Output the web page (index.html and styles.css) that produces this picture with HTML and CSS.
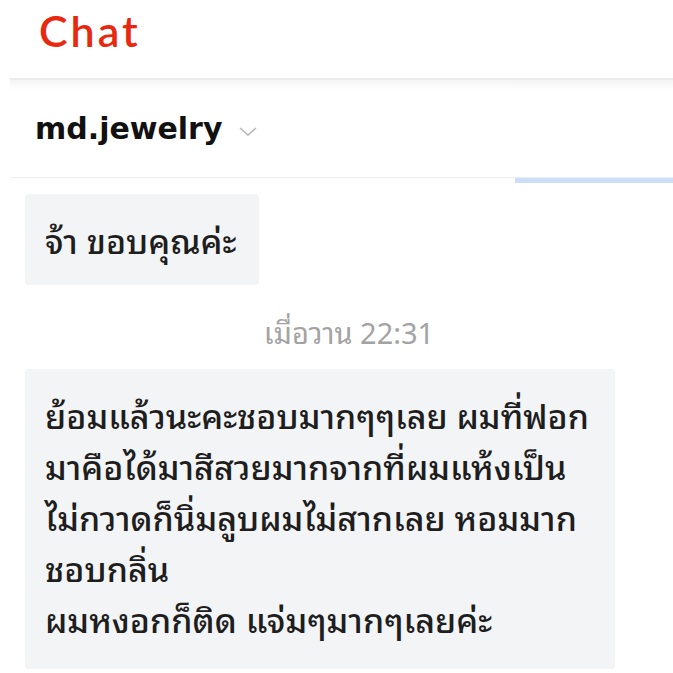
FILE: index.html
```html
<!DOCTYPE html>
<html lang="th">
<head>
  <meta charset="UTF-8">
  <title>Chat</title>
  <link rel="stylesheet" href="styles.css">
</head>
<body>

  <div class="app">
    <div class="topbar">
      <h1 class="title">Chat</h1>
    </div>
    <div class="panel">
      <div class="contact">
        <span class="contact-name">md.jewelry</span>
        <svg class="chevron" width="18" height="9" viewBox="0 0 18 9">
          <path d="M1 1 L9 8 L17 1" fill="none" stroke="#b3b3b3" stroke-width="1.4"/>
        </svg>
      </div>
      <div class="divider"><div class="divider-active"></div></div>
      <div class="messages">
        <div class="bubble">จ้า ขอบคุณค่ะ</div>
        <div class="time">เมื่อวาน 22:31</div>
        <div class="bubble bubble-long">ย้อมแล้วนะคะชอบมากๆๆเลย ผมที่ฟอก<br>มาคือได้มาสีสวยมากจากที่ผมแห้งเป็น<br>ไม่กวาดก็นิ่มลูบผมไม่สากเลย หอมมาก<br>ชอบกลิ่น<br>ผมหงอกก็ติด แจ่มๆมากๆเลยค่ะ</div>
      </div>
    </div>
  </div>

</body>
</html>
```

FILE: styles.css
```css
body {
  margin: 0;
  background-color: #fff;
  font-family: "Noto Sans Thai Looped", Tahoma, "Noto Sans", sans-serif;
  color: #222;
}
.app {
  width: 673px;
  height: 673px;
  overflow: hidden;
}
.topbar {
  height: 78px;
  padding-left: 39px;
}
.title {
  margin: 0;
  padding-top: 5px;
  font-family: Lato, "Noto Sans", sans-serif;
  font-weight: 600;
  font-size: 43px;
  letter-spacing: 3px;
  color: #e8290f;
}
.panel {
  margin-left: 10px;
  border-top: 2px solid #ebebeb;
  background: linear-gradient(#f4f4f4, #fff 10px);
}
.contact {
  display: flex;
  align-items: center;
  height: 97px;
  padding-left: 25px;
}
.contact-name {
  font-family: "DejaVu Sans", sans-serif;
  font-weight: bold;
  font-size: 30px;
  color: #111;
}
.chevron {
  margin-left: 17px;
  margin-top: 6px;
}
.divider {
  height: 1px;
  background-color: #eceef0;
  position: relative;
}
.divider-active {
  position: absolute;
  left: 505px;
  right: 0;
  top: 1px;
  height: 5px;
  background-color: #cddff8;
}
.messages {
  display: flex;
  flex-direction: column;
  align-items: flex-start;
  padding: 16px 0 0 15px;
}
.bubble {
  background-color: #f3f4f6;
  border-radius: 4px;
  padding: 19px 22px 21px 20px;
  font-size: 34px;
  font-weight: 500;
  line-height: 51px;
  color: #1e1e1e;
}
.bubble-long {
  padding-right: 26px;
  padding-bottom: 26px;
}
.time {
  align-self: stretch;
  text-align: center;
  font-size: 29px;
  color: #a3a3a3;
  margin: 23px 0 15px;
}
```
